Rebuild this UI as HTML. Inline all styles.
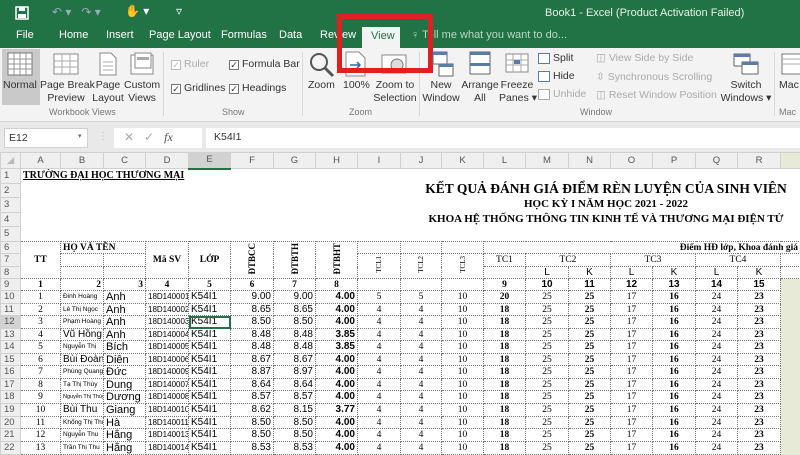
<!DOCTYPE html>
<html><head><meta charset="utf-8">
<style>
*{margin:0;padding:0;box-sizing:border-box}
body{width:800px;height:448px;overflow:hidden;background:#fff;font-family:"Liberation Sans",sans-serif;position:relative}
.a{position:absolute;white-space:nowrap}
#top{left:0;top:0;width:800px;height:48px;background:#217346}
.tab{top:29px;color:#fff;font-size:11px}
#rib{left:0;top:48px;width:800px;height:74px;background:#f3f3f3;border-bottom:1px solid #d6d6d6}
.rl{font-size:10.5px;color:#333;text-align:center}
.gl{font-size:9px;color:#777;top:107px}
.sep{top:52px;width:1px;height:64px;background:#d8d8d8}
.cb{width:10px;height:10px;border:1px solid #777;background:#fff;font-size:9px;line-height:8px;text-align:center;color:#333}
#fb{left:0;top:122px;width:800px;height:30px;background:#e9e9e9}
table{position:absolute;left:0;top:152px;width:840px;border-collapse:collapse;table-layout:fixed;font-family:"Liberation Serif",serif;font-size:9.5px}
td{border:1px solid #d4d4d4;overflow:hidden;white-space:nowrap;padding:0 2px;text-align:center;line-height:10px}
tr.h td{background:#efefef;color:#555;font-family:"Liberation Sans",sans-serif;font-size:9.5px;border-color:#d0d0d0}
td.rh{background:#efefef;color:#555;font-family:"Liberation Sans",sans-serif;font-size:9.5px;text-align:left;padding-left:3px;border-color:#d0d0d0}
.n td{border:none}
.n td.rh{border:1px solid #d0d0d0}
.d td{border:1px dotted #777}
.d td.rh{border:1px solid #d0d0d0}
b{font-weight:bold}
.s{font-family:"Liberation Sans",sans-serif;font-size:10px}
.sn{font-family:"Liberation Sans",sans-serif;font-size:6.5px;text-align:left}
.sc{font-family:"Liberation Sans",sans-serif;font-size:11px;text-align:left}
.r{text-align:right}
.v{writing-mode:vertical-rl;transform:rotate(180deg);font-weight:bold;font-size:9px}
</style></head><body>
<div id="top" class="a"></div>
<svg class="a" style="left:15px;top:6px" width="14" height="14"><rect x="1" y="1" width="12" height="12" fill="none" stroke="#fff" stroke-width="1.5"/><rect x="4" y="1" width="6" height="4" fill="#fff"/><rect x="3" y="8" width="8" height="4" fill="#fff"/></svg>
<div class="a" style="left:52px;top:5px;color:#9ab;font-size:12px">↶ ▾ &nbsp;&nbsp;↷ ▾</div>
<div class="a" style="left:125px;top:4px;color:#fff;font-size:12px">✋ ▾ &nbsp;&nbsp;&nbsp;&nbsp;&nbsp;&nbsp;&nbsp;▿</div>
<div class="a" style="left:545px;top:7px;color:#e8f0e8;font-size:11px">Book1 - Excel (Product Activation Failed)</div>
<div class="a tab" style="left:16px">File</div>
<div class="a tab" style="left:59px">Home</div>
<div class="a tab" style="left:106px">Insert</div>
<div class="a tab" style="left:149px">Page Layout</div>
<div class="a tab" style="left:221px">Formulas</div>
<div class="a tab" style="left:279px">Data</div>
<div class="a tab" style="left:320px">Review</div>
<div class="a" style="left:362px;top:27px;width:38px;height:22px;background:#f3f3f3"></div>
<div class="a" style="left:371px;top:30px;color:#217346;font-size:11px">View</div>
<div class="a" style="left:411px;top:29px;color:#b9d8c4;font-size:11px">♀ Tell me what you want to do...</div>
<div id="rib" class="a"></div>
<div class="a" style="left:2px;top:49px;width:38px;height:56px;background:#c9c9c9"></div>
<svg class="a" style="left:7px;top:52px" width="26" height="24"><rect x="1" y="1" width="24" height="22" fill="#fff" stroke="#777"/><path d="M1 7H25M1 12H25M1 17H25M7 1V23M13 1V23M19 1V23" stroke="#999"/></svg>
<svg class="a" style="left:53px;top:53px" width="26" height="22"><rect x="1" y="1" width="24" height="20" fill="#fff" stroke="#888"/><path d="M1 8H25M1 14H25M9 1V21M17 1V21" stroke="#aaa"/></svg>
<svg class="a" style="left:99px;top:52px" width="18" height="24"><path d="M1 1H12L17 6V23H1Z" fill="#fff" stroke="#888"/><path d="M4 10H14M4 14H14M4 18H14" stroke="#aaa"/></svg>
<svg class="a" style="left:130px;top:52px" width="24" height="24"><rect x="1" y="3" width="22" height="19" fill="#fff" stroke="#888"/><rect x="5" y="1" width="16" height="15" fill="#fff" stroke="#888"/><rect x="7" y="5" width="12" height="3" fill="#aaa"/></svg>
<div class="a rl" style="left:3px;top:79px">Normal</div>
<div class="a rl" style="left:40px;top:79px;width:52px;line-height:13px">Page Break<br>Preview</div>
<div class="a rl" style="left:92px;top:79px;width:32px;line-height:13px">Page<br>Layout</div>
<div class="a rl" style="left:124px;top:79px;width:36px;line-height:13px">Custom<br>Views</div>
<div class="a gl" style="left:49px">Workbook Views</div>
<div class="a sep" style="left:163px"></div>
<div class="a cb" style="left:171px;top:60px;color:#bbb;border-color:#bbb">✓</div><div class="a rl" style="left:184px;top:58px;color:#aaa">Ruler</div>
<div class="a cb" style="left:229px;top:60px">✓</div><div class="a rl" style="left:242px;top:58px">Formula Bar</div>
<div class="a cb" style="left:171px;top:84px">✓</div><div class="a rl" style="left:184px;top:82px">Gridlines</div>
<div class="a cb" style="left:229px;top:84px">✓</div><div class="a rl" style="left:242px;top:82px">Headings</div>
<div class="a gl" style="left:222px">Show</div>
<div class="a sep" style="left:302px"></div>
<svg class="a" style="left:309px;top:52px" width="26" height="26"><circle cx="10" cy="10" r="8" fill="none" stroke="#555" stroke-width="2"/><path d="M16 16L24 24" stroke="#555" stroke-width="3"/></svg>
<svg class="a" style="left:345px;top:51px" width="22" height="26"><path d="M1 1H14L20 7V25H1Z" fill="#fff" stroke="#888"/><path d="M5 14H15M12 11L15 14L12 17" stroke="#2b6cb0" stroke-width="1.5" fill="none"/></svg>
<svg class="a" style="left:381px;top:54px" width="26" height="20"><rect x="1" y="1" width="24" height="18" fill="#fff" stroke="#888"/><circle cx="16" cy="11" r="6" fill="#ddd" stroke="#777"/></svg>
<div class="a rl" style="left:308px;top:79px">Zoom</div>
<div class="a rl" style="left:343px;top:79px">100%</div>
<div class="a rl" style="left:372px;top:79px;width:46px;line-height:13px">Zoom to<br>Selection</div>
<div class="a gl" style="left:349px">Zoom</div>
<div class="a sep" style="left:419px"></div>
<div class="a" style="left:337px;top:14px;width:96px;height:59px;border:5px solid #e02020"></div>
<svg class="a" style="left:432px;top:50px" width="22" height="28"><rect x="1" y="2" width="14" height="12" fill="#fff" stroke="#666"/><rect x="1" y="2" width="14" height="3" fill="#5a7da8"/><rect x="7" y="14" width="14" height="12" fill="#fff" stroke="#666"/><rect x="7" y="14" width="14" height="3" fill="#5a7da8"/></svg>
<svg class="a" style="left:469px;top:51px" width="22" height="24"><rect x="1" y="1" width="20" height="22" fill="#fff" stroke="#666"/><rect x="1" y="1" width="20" height="3" fill="#5a7da8"/><rect x="1" y="12" width="20" height="3" fill="#5a7da8"/></svg>
<svg class="a" style="left:505px;top:53px" width="24" height="20"><rect x="1" y="1" width="22" height="18" fill="#fff" stroke="#888"/><path d="M1 7H23M1 12H23M8 1V19M16 1V19" stroke="#aaa"/><rect x="9" y="7" width="6" height="4" fill="#5a7da8"/></svg>
<div class="a rl" style="left:421px;top:79px;width:40px;line-height:13px">New<br>Window</div>
<div class="a rl" style="left:461px;top:79px;width:38px;line-height:13px">Arrange<br>All</div>
<div class="a rl" style="left:499px;top:79px;width:36px;line-height:13px">Freeze<br>Panes ▾</div>
<div class="a cb" style="left:538px;top:53px;border-color:#5a7da8;width:12px;height:11px"></div><div class="a rl" style="left:553px;top:52px">Split</div>
<div class="a cb" style="left:538px;top:71px;border-color:#5a7da8;width:12px;height:11px"></div><div class="a rl" style="left:553px;top:70px">Hide</div>
<div class="a cb" style="left:538px;top:89px;border-color:#aaa;width:12px;height:11px"></div><div class="a rl" style="left:553px;top:88px;color:#aaa">Unhide</div>
<div class="a rl" style="left:596px;top:52px;color:#aaa">◫ View Side by Side</div>
<div class="a rl" style="left:596px;top:71px;color:#aaa">⇳ Synchronous Scrolling</div>
<div class="a rl" style="left:596px;top:89px;color:#aaa">◫ Reset Window Position</div>
<div class="a gl" style="left:580px">Window</div>
<svg class="a" style="left:733px;top:53px" width="26" height="22"><rect x="1" y="1" width="16" height="12" fill="#fff" stroke="#666"/><rect x="1" y="1" width="16" height="3" fill="#5a7da8"/><rect x="9" y="9" width="16" height="12" fill="#fff" stroke="#666"/><rect x="9" y="9" width="16" height="3" fill="#5a7da8"/></svg>
<div class="a rl" style="left:718px;top:79px;width:56px;line-height:13px">Switch<br>Windows ▾</div>
<div class="a sep" style="left:774px"></div>
<svg class="a" style="left:781px;top:53px" width="19" height="22"><rect x="1" y="1" width="20" height="20" fill="#fff" stroke="#777"/><path d="M1 6H21M1 11H21" stroke="#aaa"/></svg>
<div class="a rl" style="left:779px;top:79px">Mac</div>
<div class="a gl" style="left:779px">Mac</div>
<div id="fb" class="a"></div>
<div class="a" style="left:4px;top:128px;width:84px;height:20px;background:#fff;border:1px solid #d0d0d0;font-size:10.5px;padding:3px 0 0 4px;color:#333">E12<span style="position:absolute;left:73px;top:3px;font-size:7px;color:#666">▾</span></div>
<div class="a" style="left:98px;top:131px;color:#bbb;font-size:10px">⋮</div>
<div class="a" style="left:114px;top:128px;width:88px;height:20px;background:#fff;font-size:12px;color:#aaa;padding:2px 0 0 10px">✕ &nbsp;&nbsp;✓ &nbsp;&nbsp;<i style="font-family:'Liberation Serif',serif;color:#555">fx</i></div>
<div class="a" style="left:206px;top:128px;width:594px;height:20px;background:#fff;font-size:10.5px;padding:3px 0 0 8px;color:#333">K54I1</div>
<table>
<colgroup><col style="width:20px"><col style="width:40px"><col style="width:43px"><col style="width:42px"><col style="width:43px"><col style="width:42px"><col style="width:43px"><col style="width:42px"><col style="width:42px"><col style="width:43px"><col style="width:41px"><col style="width:42px"><col style="width:42px"><col style="width:43px"><col style="width:42px"><col style="width:42px"><col style="width:43px"><col style="width:42px"><col style="width:43px"><col style="width:20px"></colgroup>
<tr class="h" style="height:16px"><td style="color:#bbb">◢</td><td>A</td><td>B</td><td>C</td><td>D</td><td style="background:#d2d2d2;border-bottom:2px solid #217346">E</td><td>F</td><td>G</td><td>H</td><td>I</td><td>J</td><td>K</td><td>L</td><td>M</td><td>N</td><td>O</td><td>P</td><td>Q</td><td>R</td><td style="background:#e8ead8"></td></tr>
<tr class="n" style="height:15px"><td class="rh">1</td><td colspan="4" style="text-align:left;font-weight:bold;text-decoration:underline;font-size:10px">TRƯỜNG ĐẠI HỌC THƯƠNG MẠI</td><td colspan="15"></td></tr>
<tr class="n" style="height:14px"><td class="rh">2</td><td colspan="19"></td></tr>
<tr class="n" style="height:15px"><td class="rh">3</td><td colspan="19"></td></tr>
<tr class="n" style="height:14px"><td class="rh">4</td><td colspan="19"></td></tr>
<tr class="n" style="height:15px"><td class="rh">5</td><td colspan="19"></td></tr>
<tr class="d" style="height:12px"><td class="rh">6</td><td rowspan="3"><b>TT</b></td><td colspan="2" style="text-align:left"><b>HỌ VÀ TÊN</b></td><td rowspan="3"><b>Mã SV</b></td><td rowspan="3"><b>LỚP</b></td><td rowspan="3"><span class="v">ĐTBCC</span></td><td rowspan="3"><span class="v">ĐTBTH</span></td><td rowspan="3"><span class="v">ĐTBHT</span></td><td></td><td></td><td></td><td colspan="8" class="r" style="font-weight:bold;overflow:visible">Điểm HĐ lớp, Khoa đánh giá</td><td style="border:none;background:#e8ead8"></td></tr>
<tr class="d" style="height:13px"><td class="rh">7</td><td></td><td></td><td rowspan="2"><span class="v" style="font-weight:normal;font-size:7px">TCL1</span></td><td rowspan="2"><span class="v" style="font-weight:normal;font-size:7px">TCL2</span></td><td rowspan="2"><span class="v" style="font-weight:normal;font-size:7px">TCL3</span></td><td>TC1</td><td colspan="2">TC2</td><td colspan="2">TC3</td><td colspan="2">TC4</td><td></td><td style="border:none;background:#e8ead8"></td></tr>
<tr class="d s" style="height:12px"><td class="rh">8</td><td></td><td></td><td></td><td>L</td><td>K</td><td>L</td><td>K</td><td>L</td><td>K</td><td></td><td style="border:none;background:#e8ead8"></td></tr>
<tr class="d" style="height:12px;font-weight:bold"><td class="rh" style="font-weight:normal">9</td><td>1</td><td class="r">2</td><td class="r">3</td><td>4</td><td>5</td><td>6</td><td>7</td><td>8</td><td></td><td></td><td></td><td>9</td><td class="s"><b>10</b></td><td class="s"><b>11</b></td><td class="s"><b>12</b></td><td class="s"><b>13</b></td><td class="s"><b>14</b></td><td class="s"><b>15</b></td><td style="border:none;background:#e8ead8"></td></tr>
<tr class="d" style="height:13px"><td class="rh">10</td><td>1</td><td class="sn">Đinh Hoàng</td><td class="sc">Anh</td><td class="s" style="font-size:8px">18D140001</td><td class="sc" style="font-size:10px">K54I1</td><td class="s r">9.00</td><td class="s r">9.00</td><td class="s r"><b>4.00</b></td><td>5</td><td>5</td><td>10</td><td><b>20</b></td><td>25</td><td><b>25</b></td><td>17</td><td><b>16</b></td><td>24</td><td><b>23</b></td><td style="border:none;background:#e8ead8"></td></tr>
<tr class="d" style="height:12px"><td class="rh">11</td><td>2</td><td class="sn">Lê Thị Ngọc</td><td class="sc">Anh</td><td class="s" style="font-size:8px">18D140002</td><td class="sc" style="font-size:10px">K54I1</td><td class="s r">8.65</td><td class="s r">8.65</td><td class="s r"><b>4.00</b></td><td>4</td><td>4</td><td>10</td><td><b>18</b></td><td>25</td><td><b>25</b></td><td>17</td><td><b>16</b></td><td>24</td><td><b>23</b></td><td style="border:none;background:#e8ead8"></td></tr>
<tr class="d" style="height:13px"><td class="rh" style="background:#d2d2d2">12</td><td>3</td><td class="sn">Phạm Hoàng</td><td class="sc">Anh</td><td class="s" style="font-size:8px">18D140003</td><td class="sc" style="font-size:10px;outline:2px solid #217346;outline-offset:-2px">K54I1</td><td class="s r">8.50</td><td class="s r">8.50</td><td class="s r"><b>4.00</b></td><td>4</td><td>4</td><td>10</td><td><b>18</b></td><td>25</td><td><b>25</b></td><td>17</td><td><b>16</b></td><td>24</td><td><b>23</b></td><td style="border:none;background:#e8ead8"></td></tr>
<tr class="d" style="height:12px"><td class="rh">13</td><td>4</td><td class="sc" style="font-size:10px">Vũ Hồng</td><td class="sc">Anh</td><td class="s" style="font-size:8px">18D140004</td><td class="sc" style="font-size:10px">K54I1</td><td class="s r">8.48</td><td class="s r">8.48</td><td class="s r"><b>3.85</b></td><td>4</td><td>4</td><td>10</td><td><b>18</b></td><td>25</td><td><b>25</b></td><td>17</td><td><b>16</b></td><td>24</td><td><b>23</b></td><td style="border:none;background:#e8ead8"></td></tr>
<tr class="d" style="height:13px"><td class="rh">14</td><td>5</td><td class="sn">Nguyễn Thị</td><td class="sc">Bích</td><td class="s" style="font-size:8px">18D140005</td><td class="sc" style="font-size:10px">K54I1</td><td class="s r">8.48</td><td class="s r">8.48</td><td class="s r"><b>3.85</b></td><td>4</td><td>4</td><td>10</td><td><b>18</b></td><td>25</td><td><b>25</b></td><td>17</td><td><b>16</b></td><td>24</td><td><b>23</b></td><td style="border:none;background:#e8ead8"></td></tr>
<tr class="d" style="height:12px"><td class="rh">15</td><td>6</td><td class="sc" style="font-size:10px">Bùi Đoàn</td><td class="sc">Diên</td><td class="s" style="font-size:8px">18D140006</td><td class="sc" style="font-size:10px">K54I1</td><td class="s r">8.67</td><td class="s r">8.67</td><td class="s r"><b>4.00</b></td><td>4</td><td>4</td><td>10</td><td><b>18</b></td><td>25</td><td><b>25</b></td><td>17</td><td><b>16</b></td><td>24</td><td><b>23</b></td><td style="border:none;background:#e8ead8"></td></tr>
<tr class="d" style="height:13px"><td class="rh">16</td><td>7</td><td class="sn">Phùng Quang</td><td class="sc">Đức</td><td class="s" style="font-size:8px">18D140009</td><td class="sc" style="font-size:10px">K54I1</td><td class="s r">8.87</td><td class="s r">8.97</td><td class="s r"><b>4.00</b></td><td>4</td><td>4</td><td>10</td><td><b>18</b></td><td>25</td><td><b>25</b></td><td>17</td><td><b>16</b></td><td>24</td><td><b>23</b></td><td style="border:none;background:#e8ead8"></td></tr>
<tr class="d" style="height:12px"><td class="rh">17</td><td>8</td><td class="sn">Tạ Thị Thúy</td><td class="sc">Dung</td><td class="s" style="font-size:8px">18D140007</td><td class="sc" style="font-size:10px">K54I1</td><td class="s r">8.64</td><td class="s r">8.64</td><td class="s r"><b>4.00</b></td><td>4</td><td>4</td><td>10</td><td><b>18</b></td><td>25</td><td><b>25</b></td><td>17</td><td><b>16</b></td><td>24</td><td><b>23</b></td><td style="border:none;background:#e8ead8"></td></tr>
<tr class="d" style="height:13px"><td class="rh">18</td><td>9</td><td class="sn" style="font-size:5.5px">Nguyễn Thị Thùy</td><td class="sc">Dương</td><td class="s" style="font-size:8px">18D140008</td><td class="sc" style="font-size:10px">K54I1</td><td class="s r">8.57</td><td class="s r">8.57</td><td class="s r"><b>4.00</b></td><td>4</td><td>4</td><td>10</td><td><b>18</b></td><td>25</td><td><b>25</b></td><td>17</td><td><b>16</b></td><td>24</td><td><b>23</b></td><td style="border:none;background:#e8ead8"></td></tr>
<tr class="d" style="height:13px"><td class="rh">19</td><td>10</td><td class="sc" style="font-size:10px">Bùi Thu</td><td class="sc">Giang</td><td class="s" style="font-size:8px">18D140010</td><td class="sc" style="font-size:10px">K54I1</td><td class="s r">8.62</td><td class="s r">8.15</td><td class="s r"><b>3.77</b></td><td>4</td><td>4</td><td>10</td><td><b>18</b></td><td>25</td><td><b>25</b></td><td>17</td><td><b>16</b></td><td>24</td><td><b>23</b></td><td style="border:none;background:#e8ead8"></td></tr>
<tr class="d" style="height:12px"><td class="rh">20</td><td>11</td><td class="sn">Khổng Thị Thu</td><td class="sc">Hà</td><td class="s" style="font-size:8px">18D140011</td><td class="sc" style="font-size:10px">K54I1</td><td class="s r">8.50</td><td class="s r">8.50</td><td class="s r"><b>4.00</b></td><td>4</td><td>4</td><td>10</td><td><b>18</b></td><td>25</td><td><b>25</b></td><td>17</td><td><b>16</b></td><td>24</td><td><b>23</b></td><td style="border:none;background:#e8ead8"></td></tr>
<tr class="d" style="height:13px"><td class="rh">21</td><td>12</td><td class="sn">Nguyễn Thu</td><td class="sc">Hằng</td><td class="s" style="font-size:8px">18D140013</td><td class="sc" style="font-size:10px">K54I1</td><td class="s r">8.50</td><td class="s r">8.50</td><td class="s r"><b>4.00</b></td><td>4</td><td>4</td><td>10</td><td><b>18</b></td><td>25</td><td><b>25</b></td><td>17</td><td><b>16</b></td><td>24</td><td><b>23</b></td><td style="border:none;background:#e8ead8"></td></tr>
<tr class="d" style="height:13px"><td class="rh">22</td><td>13</td><td class="sn">Trần Thị Thu</td><td class="sc">Hằng</td><td class="s" style="font-size:8px">18D140014</td><td class="sc" style="font-size:10px">K54I1</td><td class="s r">8.53</td><td class="s r">8.53</td><td class="s r"><b>4.00</b></td><td>4</td><td>4</td><td>10</td><td><b>18</b></td><td>25</td><td><b>25</b></td><td>17</td><td><b>16</b></td><td>24</td><td><b>23</b></td><td style="border:none;background:#e8ead8"></td></tr>
</table>
<div class="a" style="left:420px;top:182px;width:372px;text-align:center;font-family:'Liberation Serif',serif;font-weight:bold;font-size:13.5px;line-height:14px">KẾT QUẢ ĐÁNH GIÁ ĐIỂM RÈN LUYỆN CỦA SINH VIÊN<br><span style="font-size:11px;line-height:13px">HỌC KỲ I NĂM HỌC 2021 - 2022</span><br><span style="font-size:11px;line-height:13px">KHOA HỆ THỐNG THÔNG TIN KINH TẾ VÀ THƯƠNG MẠI ĐIỆN TỬ</span></div>
</body></html>
